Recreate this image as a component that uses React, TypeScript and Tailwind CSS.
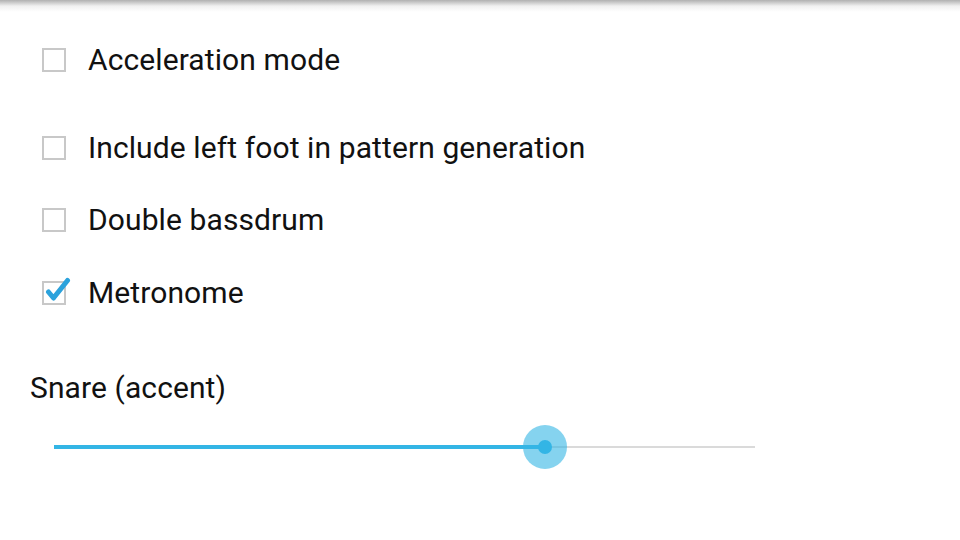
import { useState } from 'react';

type RowProps = {
    label: string;
    checked: boolean;
    onToggle: () => void;
    className?: string;
};

function CheckRow({ label, checked, onToggle, className = '' }: RowProps) {
    return (
        <div className={`flex items-center h-[72px] pl-[42px] cursor-pointer ${className}`} onClick={onToggle}>
            <div className="relative w-[24px] h-[24px] border-2 border-[#c8c8c8] bg-white shrink-0">
                {checked && (
                    <svg className="absolute left-[1px] -top-[6px]" width="28" height="26" viewBox="0 0 28 26">
                        <path d="M3.5 15 L8.5 21 L22.5 3.5" fill="none" stroke="#2ba2dc" strokeWidth="5" strokeLinecap="round" strokeLinejoin="round" />
                    </svg>
                )}
            </div>
            <span className="ml-[22px] text-[30px] leading-[40px] tracking-[0.1px] text-[#111] font-['Roboto',sans-serif]">{label}</span>
        </div>
    );
}

export default function App() {
    const [accel, setAccel] = useState(false);
    const [leftFoot, setLeftFoot] = useState(false);
    const [doubleBass, setDoubleBass] = useState(false);
    const [metronome, setMetronome] = useState(true);
    const value = 0.7; // slider position

    return (
        <div className="relative w-[960px] h-[540px] bg-white overflow-hidden font-['Roboto',sans-serif]">
            <div className="absolute inset-x-0 top-0 h-[12px] bg-gradient-to-b from-[#b0b0b0] via-[#f0f0f0] to-white" />
            <div className="flex flex-col pt-[24px]">
                <CheckRow label="Acceleration mode" checked={accel} onToggle={() => setAccel(!accel)} />
                <CheckRow label="Include left foot in pattern generation" checked={leftFoot} onToggle={() => setLeftFoot(!leftFoot)} className="mt-[16px]" />
                <CheckRow label="Double bassdrum" checked={doubleBass} onToggle={() => setDoubleBass(!doubleBass)} />
                <CheckRow label="Metronome" checked={metronome} onToggle={() => setMetronome(!metronome)} className="mt-px" />

                <div className="pl-[30px] mt-[39px] text-[30px] leading-[40px] tracking-[0.1px] text-[#111]">Snare (accent)</div>

                <div className="relative ml-[54px] w-[701px] h-[44px] mt-[17px] flex items-center">
                    <div className="w-full h-[2px] bg-[#dadada]" />
                    <div className="absolute left-0 top-1/2 -translate-y-1/2 h-[4px] bg-[#33b5e5]" style={{ width: `${value * 100}%` }} />
                    <div
                        className="absolute top-1/2 -translate-x-1/2 -translate-y-1/2 w-[44px] h-[44px] rounded-full bg-[#33b5e5]/60 flex items-center justify-center"
                        style={{ left: `${value * 100}%` }}
                    >
                        <div className="w-[14px] h-[14px] rounded-full bg-[#33b5e5]" />
                    </div>
                </div>
            </div>
        </div>
    );
}
